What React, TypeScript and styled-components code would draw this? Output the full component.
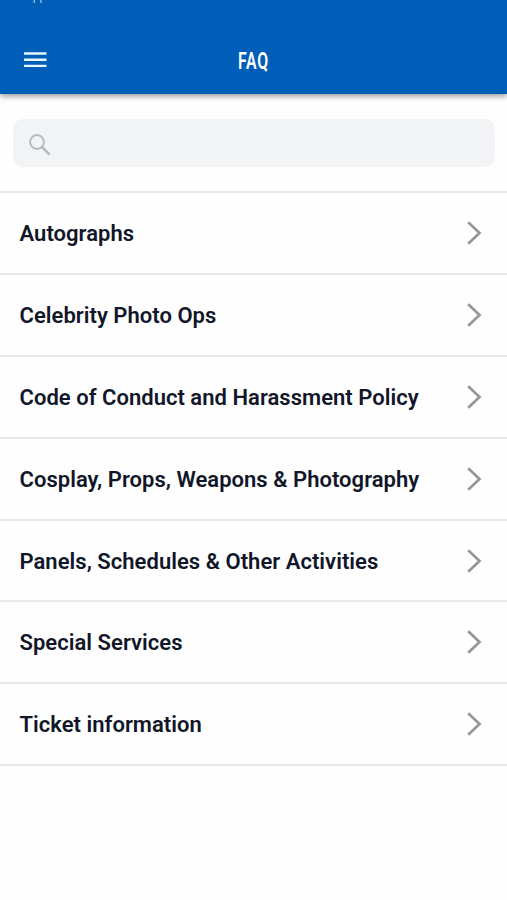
import React from "react";
import styled, { createGlobalStyle } from "styled-components";

const GlobalStyle = createGlobalStyle`
  *, *::before, *::after { box-sizing: border-box; }
  html, body { margin: 0; padding: 0; background: #fefefe; }
  body { font-family: Roboto, "Liberation Sans", sans-serif; }
`;

const Screen = styled.div`
  display: flex;
  flex-direction: column;
  width: 100%;
  height: 900px;
  overflow: hidden;
  background: #fefefe;
`;

const Header = styled.header`
  height: 94px;
  flex: none;
  background: #005eb8;
  color: #fff;
  box-shadow: 0 2px 6px rgba(0, 0, 0, 0.42);
`;

const StatusStrip = styled.div`
  height: 26px;
  padding-left: 25px;
  overflow: hidden;
  font-size: 12px;
  line-height: 14px;
  color: #b5d3f0;
`;

const StatusText = styled.div`
  margin-top: -11px;
`;

const Toolbar = styled.div`
  display: grid;
  grid-template-columns: 70px 1fr 70px;
  align-items: center;
  height: 68px;
`;

const MenuButton = styled.button`
  display: flex;
  width: 70px;
  height: 48px;
  padding: 0 0 0 24px;
  align-items: center;
  border: 0;
  background: none;
`;

const Title = styled.h1`
  margin: 2px 0 0;
  font-size: 24px;
  font-weight: 600;
  line-height: 30px;
  text-align: center;
  letter-spacing: 1.2px;
  transform: scaleX(0.66);
`;

const SearchField = styled.div`
  display: flex;
  flex: none;
  align-items: center;
  height: 48px;
  margin: 25px 12.5px 24px 13px;
  padding: 3px 0 0 16px;
  border-radius: 10px;
  background: #f1f3f5;
`;

const List = styled.ul`
  flex: none;
  margin: 0;
  padding: 0;
  list-style: none;
  border-top: 2px solid #e9e9ea;
`;

const Row = styled.li`
  display: flex;
  align-items: center;
  justify-content: space-between;
  height: 81.9px;
  padding: 0 25.5px 0 19.5px;
  border-bottom: 2px solid #e9e9ea;
`;

const Label = styled.span`
  margin-top: 2px;
  font-size: 22px;
  font-weight: 600;
  line-height: 28px;
  letter-spacing: 0.03px;
  white-space: nowrap;
  color: #111629;
`;

const topics = [
  "Autographs",
  "Celebrity Photo Ops",
  "Code of Conduct and Harassment Policy",
  "Cosplay, Props, Weapons & Photography",
  "Panels, Schedules & Other Activities",
  "Special Services",
  "Ticket information",
];

const MenuIcon = () => (
  <svg width="23" height="16" viewBox="0 0 23 16" fill="#e9f5ff">
    <path d="M0 .3h22.5v2.4H0zM0 6.5h22.5v2.4H0zM0 12.7h22.5v2.4H0z" />
  </svg>
);

const SearchIcon = () => (
  <svg width="22" height="22" viewBox="0 0 22 22" fill="none" stroke="#b9babb">
    <circle cx="8" cy="8" r="6.9" strokeWidth="2" />
    <path d="M13 13l7.5 7.6" strokeWidth="2.6" />
  </svg>
);

const Chevron = () => (
  <svg width="15" height="24" viewBox="0 0 15 24" fill="none" stroke="#969696" strokeWidth="2.7">
    <path d="M1.2 1.2l11.3 10.8L1.2 22.8" />
  </svg>
);

export default function App() {
  return (
    <Screen>
      <GlobalStyle />
      <Header>
        <StatusStrip>
          <StatusText>Application Store</StatusText>
        </StatusStrip>
        <Toolbar>
          <MenuButton aria-label="Menu">
            <MenuIcon />
          </MenuButton>
          <Title>FAQ</Title>
        </Toolbar>
      </Header>
      <SearchField role="search">
        <SearchIcon />
      </SearchField>
      <List>
        {topics.map((topic) => (
          <Row key={topic}>
            <Label>{topic}</Label>
            <Chevron />
          </Row>
        ))}
      </List>
    </Screen>
  );
}
